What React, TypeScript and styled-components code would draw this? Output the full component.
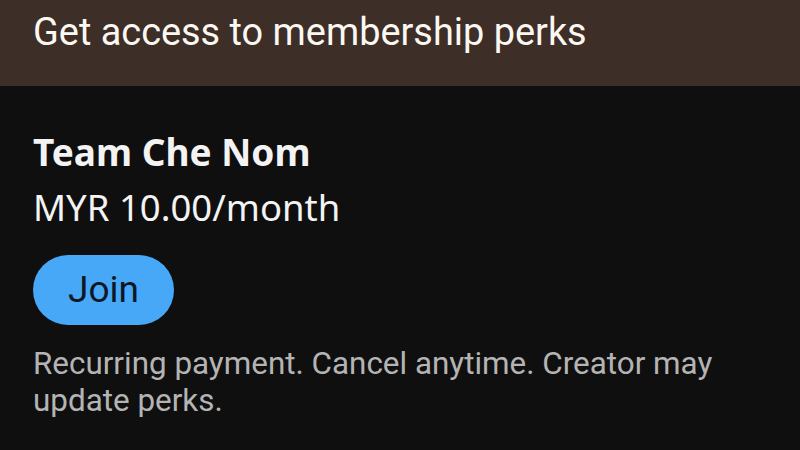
import React from "react";
import styled, { createGlobalStyle } from "styled-components";

const Global = createGlobalStyle`
  html, body { margin: 0; padding: 0; background: #0f0f0f; }
  body { width: 800px; height: 450px; overflow: hidden; }
`;

const Page = styled.div`
  width: 800px;
  height: 450px;
  background: #0f0f0f;
  display: flex;
  flex-direction: column;
`;

const Header = styled.header`
  height: 86px;
  flex-shrink: 0;
  background: #3d2e27;
  box-sizing: border-box;
  padding: 10px 33px 0;
`;

const HeaderTitle = styled.h1`
  margin: 0;
  font-family: Roboto, "Liberation Sans", sans-serif;
  font-weight: 400;
  font-size: 37.9px;
  line-height: 44px;
  color: #fbf8f2;
  white-space: nowrap;
`;

const Body = styled.section`
  display: flex;
  flex-direction: column;
  align-items: flex-start;
  padding: 42px 33px 0;
`;

const TierName = styled.h2`
  margin: 0;
  font-family: "Noto Sans", sans-serif;
  font-weight: 700;
  font-size: 37px;
  line-height: 48px;
  color: #f3f3f3;
`;

const Price = styled.div`
  margin-top: 9px;
  font-family: "Noto Sans", sans-serif;
  font-weight: 400;
  font-size: 36.5px;
  line-height: 44px;
  color: #f3f3f3;
`;

const JoinButton = styled.button`
  margin-top: 26px;
  width: 141px;
  height: 70px;
  border: none;
  border-radius: 35px;
  background: #48a8f8;
  color: #0e1724;
  font-family: Roboto, "Liberation Sans", sans-serif;
  font-size: 37px;
  font-weight: 400;
  padding: 0 0 2px;
  cursor: pointer;
`;

const Note = styled.p`
  margin: 20px 0 0;
  max-width: 740px;
  font-family: Roboto, "Liberation Sans", sans-serif;
  font-size: 31.4px;
  line-height: 37px;
  color: #b4b4b4;
`;

export default function App() {
  return (
    <Page>
      <Global />
      <Header>
        <HeaderTitle>Get access to membership perks</HeaderTitle>
      </Header>
      <Body>
        <TierName>Team Che Nom</TierName>
        <Price>MYR 10.00/month</Price>
        <JoinButton>Join</JoinButton>
        <Note>Recurring payment. Cancel anytime. Creator may update perks.</Note>
      </Body>
    </Page>
  );
}
